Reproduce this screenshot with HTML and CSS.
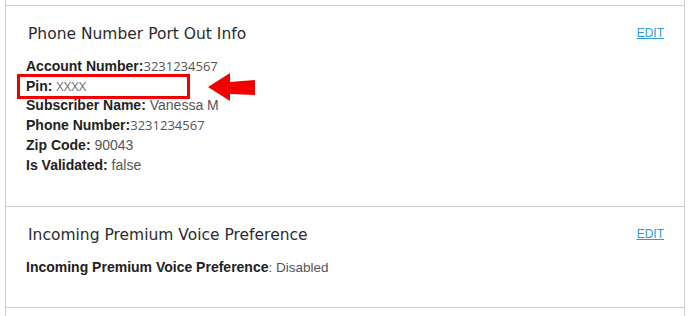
FILE: index.html
```html
<!DOCTYPE html>
<html lang="en">
<head>
<meta charset="utf-8">
<title>Port Out Info</title>
<link rel="stylesheet" href="styles.css">
</head>
<body>
<div class="page">
  <section class="panel panel-port">
    <div class="panel-head">
      <h2 class="panel-title">Phone Number Port Out Info</h2>
      <a class="edit" href="#">EDIT</a>
    </div>
    <ul class="fields">
      <li><b class="label">Account Number:</b><span class="val num">3231234567</span></li>
      <li><b class="label">Pin:</b> <span class="val num light">XXXX</span></li>
      <li><b class="label">Subscriber Name:</b> <span class="val">Vanessa M</span></li>
      <li><b class="label">Phone Number:</b><span class="val num">3231234567</span></li>
      <li><b class="label">Zip Code:</b> <span class="val">90043</span></li>
      <li><b class="label">Is Validated:</b> <span class="val">false</span></li>
    </ul>
  </section>
  <section class="panel panel-voice">
    <div class="panel-head">
      <h2 class="panel-title">Incoming Premium Voice Preference</h2>
      <a class="edit" href="#">EDIT</a>
    </div>
    <ul class="fields">
      <li><b class="label">Incoming Premium Voice Preference</b><span class="val val-tight">: Disabled</span></li>
    </ul>
  </section>
  <section class="panel panel-next"></section>

  <div class="callout-box"></div>
  <svg class="callout-arrow" width="50" height="31" viewBox="0 0 50 31" aria-hidden="true">
    <polygon points="1,15 23,1 23,10 48,8 48,23 23,22 23,29" fill="#f20000"/>
  </svg>
</div>
</body>
</html>
```

FILE: styles.css
```css
html, body {
  margin: 0;
  padding: 0;
  background: #fff;
}

body {
  font-family: "Liberation Sans", Arial, sans-serif;
}

.page {
  position: relative;
  box-sizing: border-box;
  margin-left: 5px;
  width: 680px;
  height: 316px;
  padding-top: 5px;
  border-left: 1px solid #cccccc;
  border-right: 1px solid #cccccc;
  overflow: hidden;
}

.panel {
  border-top: 1px solid #cccccc;
  padding: 18px 20px 0 20px;
}

.panel-port {
  padding-bottom: 30.8px;
}

.panel-voice {
  padding-bottom: 29.3px;
}

.panel-next {
  padding: 0;
  height: 20px;
}

.panel-head {
  display: flex;
  justify-content: space-between;
  align-items: flex-start;
}

.panel-title {
  margin: 0 0 0 2px;
  font-family: "DejaVu Sans", sans-serif;
  font-weight: 400;
  font-size: 15.5px;
  line-height: 20px;
  color: #2b2b2b;
}

.edit {
  margin-top: 2px;
  font-family: "Liberation Sans", Arial, sans-serif;
  font-size: 12px;
  line-height: 14px;
  color: #2b9bd8;
  text-decoration: underline;
}

.fields {
  list-style: none;
  margin: 13px 0 0 0;
  padding: 0;
  font-size: 14px;
  line-height: 19.7px;
}

.label {
  font-weight: 700;
  color: #222222;
}

.val {
  font-size: 14px;
  color: #555555;
}

.val-tight {
  font-size: 13.5px;
}

.num {
  font-family: "Open Sans", sans-serif;
  font-size: 13px;
}

.light {
  color: #707070;
}

.callout-box {
  position: absolute;
  left: 11px;
  top: 74px;
  width: 173px;
  height: 25px;
  box-sizing: border-box;
  border: 3px solid #f20000;
}

.callout-arrow {
  position: absolute;
  left: 201px;
  top: 72px;
}
```
